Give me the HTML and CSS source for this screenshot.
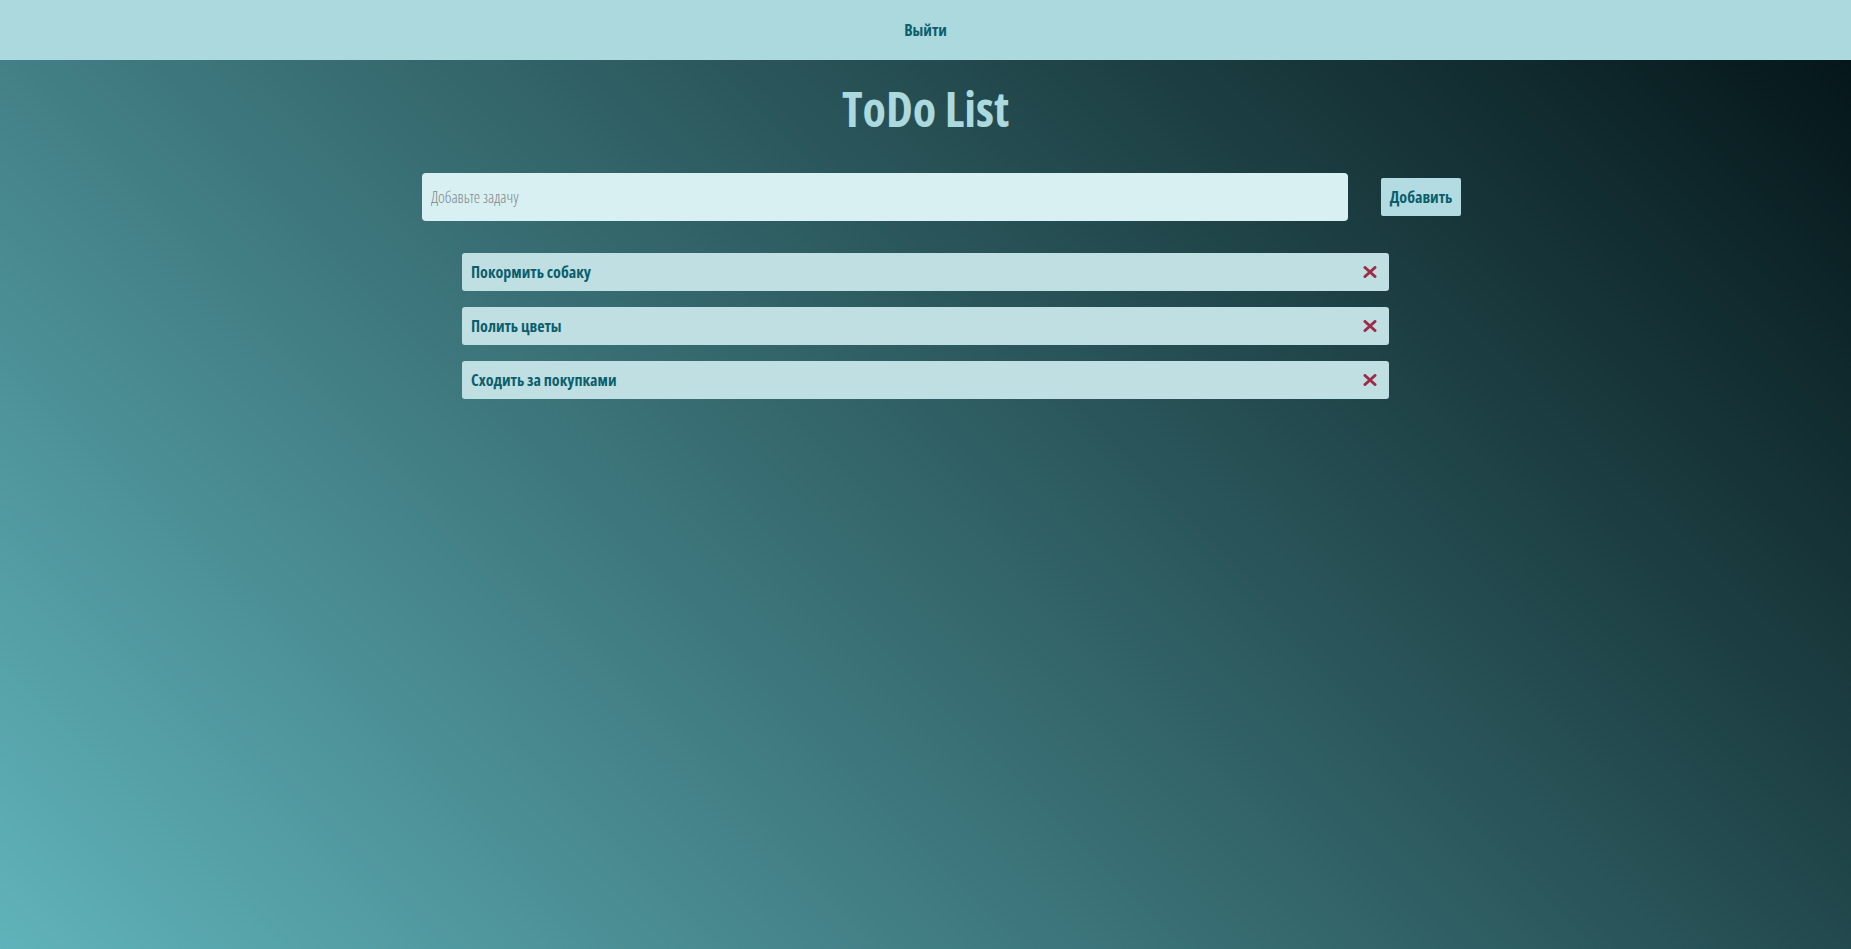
FILE: index.html
```html
<!DOCTYPE html>
<html lang="ru">
<head>
<meta charset="utf-8">
<title>ToDo List</title>
<link rel="stylesheet" href="styles.css">
</head>
<body>
<header class="topbar">
  <a class="logout" href="#">Выйти</a>
</header>
<main class="page">
  <h1 class="title">ToDo List</h1>
  <form class="add-form">
    <input class="add-input" type="text" placeholder="Добавьте задачу">
    <button class="add-btn" type="button">Добавить</button>
  </form>
  <ul class="tasks">
    <li class="task"><span class="task-text">Покормить собаку</span>
      <button class="task-del" type="button" aria-label="Удалить"><svg viewBox="0 0 14 12" width="14" height="12"><path d="M2 1.5 L12 10.5 M12 1.5 L2 10.5" stroke="#9c2c48" stroke-width="3" stroke-linecap="round"/></svg></button></li>
    <li class="task"><span class="task-text">Полить цветы</span>
      <button class="task-del" type="button" aria-label="Удалить"><svg viewBox="0 0 14 12" width="14" height="12"><path d="M2 1.5 L12 10.5 M12 1.5 L2 10.5" stroke="#9c2c48" stroke-width="3" stroke-linecap="round"/></svg></button></li>
    <li class="task"><span class="task-text">Сходить за покупками</span>
      <button class="task-del" type="button" aria-label="Удалить"><svg viewBox="0 0 14 12" width="14" height="12"><path d="M2 1.5 L12 10.5 M12 1.5 L2 10.5" stroke="#9c2c48" stroke-width="3" stroke-linecap="round"/></svg></button></li>
  </ul>
</main>
</body>
</html>
```
FILE: styles.css
```css
* { box-sizing: border-box; }
html, body { height: 100%; }
body {
  margin: 0;
  font-family: "Open Sans", "Liberation Sans", sans-serif;
  font-stretch: 75%;
  background: linear-gradient(45deg, #60b3ba 0%, #031316 100%);
  min-height: 949px;
}
.topbar {
  height: 60px;
  background: #acd9de;
  display: flex;
  align-items: center;
  justify-content: center;
}
.logout {
  color: #0b5e6c;
  font-weight: 700;
  font-size: 16px;
  text-decoration: none;
}
.page {
  display: flex;
  flex-direction: column;
  align-items: center;
}
.title {
  margin: 16px 0 0;
  font-size: 48px;
  line-height: 66px;
  font-weight: 700;
  color: #acd9de;
}
.add-form {
  margin-top: 31px;
  display: flex;
  align-items: center;
  gap: 33px;
  padding-left: 32px;
}
.add-input {
  width: 926px;
  height: 48px;
  border: none;
  border-radius: 4px;
  background: #d9f0f3;
  padding: 0 9px;
  font-family: inherit;
  font-stretch: 75%;
  font-size: 16px;
  font-weight: 300;
  color: #2b4a50;
  outline: none;
}
.add-input::placeholder { color: #7b8688; font-weight: 300; }
.add-btn {
  width: 80px;
  height: 38px;
  border: none;
  border-radius: 2px;
  background: #b2dce1;
  color: #0b5e6c;
  font-family: inherit;
  font-stretch: 75%;
  font-weight: 700;
  font-size: 16px;
  padding: 0;
}
.tasks {
  list-style: none;
  margin: 32px 0 0;
  padding: 0;
  width: 927px;
  display: flex;
  flex-direction: column;
  gap: 16px;
}
.task {
  height: 38px;
  background: #c0dfe3;
  border-radius: 3px;
  display: flex;
  align-items: center;
  justify-content: space-between;
  padding: 0 12px 0 9px;
}
.task-text {
  color: #0b5e6c;
  font-weight: 700;
  font-size: 16px;
}
.task-del {
  border: none;
  background: none;
  padding: 0;
  width: 14px;
  height: 12px;
  display: flex;
}
```
